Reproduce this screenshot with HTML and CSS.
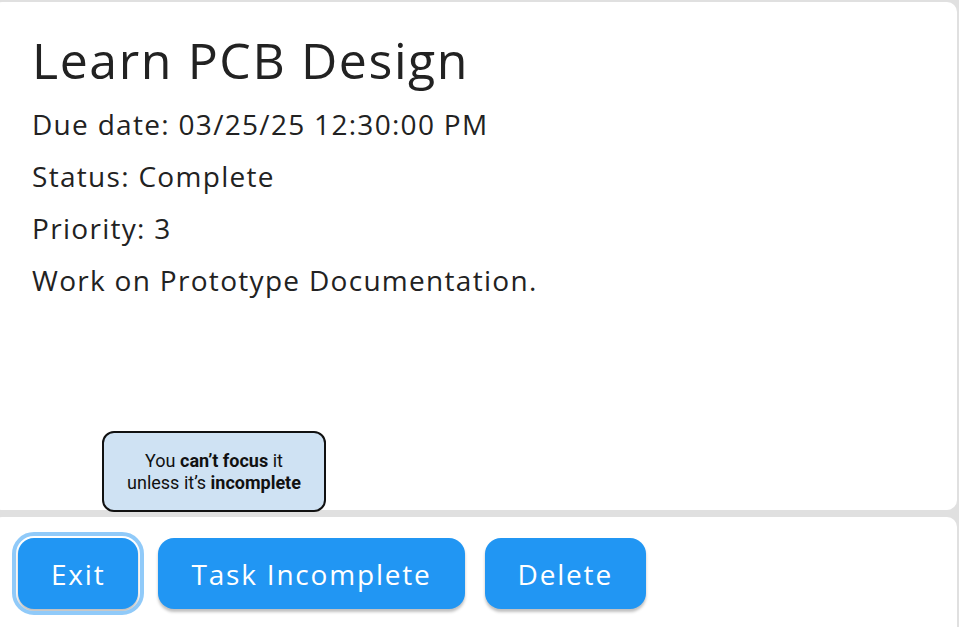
FILE: index.html
```html
<!DOCTYPE html>
<html lang="en">
<head>
<meta charset="utf-8">
<title>Learn PCB Design</title>
<link rel="stylesheet" href="styles.css">
</head>
<body>
<div class="page">
  <section class="card details">
    <h1 class="title">Learn PCB Design</h1>
    <p class="line">Due date: 03/25/25 12:30:00 PM</p>
    <p class="line">Status: Complete</p>
    <p class="line">Priority: 3</p>
    <p class="line">Work on Prototype Documentation.</p>
    <div class="tooltip">You <b>can’t focus</b> it<br>unless it’s <b>incomplete</b></div>
  </section>
  <section class="card actions">
    <button class="btn focused">Exit</button>
    <button class="btn">Task Incomplete</button>
    <button class="btn">Delete</button>
  </section>
</div>
</body>
</html>
```
FILE: styles.css
```css
html, body {
  margin: 0;
  padding: 0;
  background: #e0e0e0;
  height: 100%;
  overflow: hidden;
}
.page {
  display: flex;
  flex-direction: column;
  gap: 7px;
  padding: 2px 2px 0 0;
  margin-left: -8px;
  font-family: "Open Sans", "DejaVu Sans", sans-serif;
  color: #222;
}
.card {
  background: #fff;
  border-radius: 10px;
}
.details {
  position: relative;
  height: 508px;
  box-sizing: border-box;
  padding: 30px 0 0 40px;
}
.title {
  margin: 0 0 10px;
  font-size: 50px;
  font-weight: 400;
  line-height: 56px;
  letter-spacing: 1.6px;
}
.line {
  margin: 0;
  font-size: 28px;
  line-height: 52px;
  letter-spacing: 1.3px;
}
.tooltip {
  position: absolute;
  left: 110px;
  top: 429px;
  width: 224px;
  height: 81px;
  box-sizing: border-box;
  border: 2px solid #111;
  border-radius: 12px;
  background: #cfe2f3;
  font-family: Roboto, "Liberation Sans", sans-serif;
  font-size: 18px;
  line-height: 22px;
  color: #111;
  text-align: center;
  padding-top: 17px;
}
.tooltip b { font-weight: 700; }
.actions {
  height: 110px;
  display: flex;
  align-items: flex-start;
  gap: 20px;
  padding: 21px 0 0 26px;
}
.btn {
  height: 71px;
  padding: 0 33px;
  border: none;
  border-radius: 16px;
  background: #2196f3;
  color: #fff;
  font-family: "Open Sans", "DejaVu Sans", sans-serif;
  font-size: 28px;
  letter-spacing: 1.8px;
  box-shadow: 0 3px 3px rgba(0,0,0,0.25);
}
.focused {
  outline: 4px solid #90caf9;
  outline-offset: 2px;
}
```
